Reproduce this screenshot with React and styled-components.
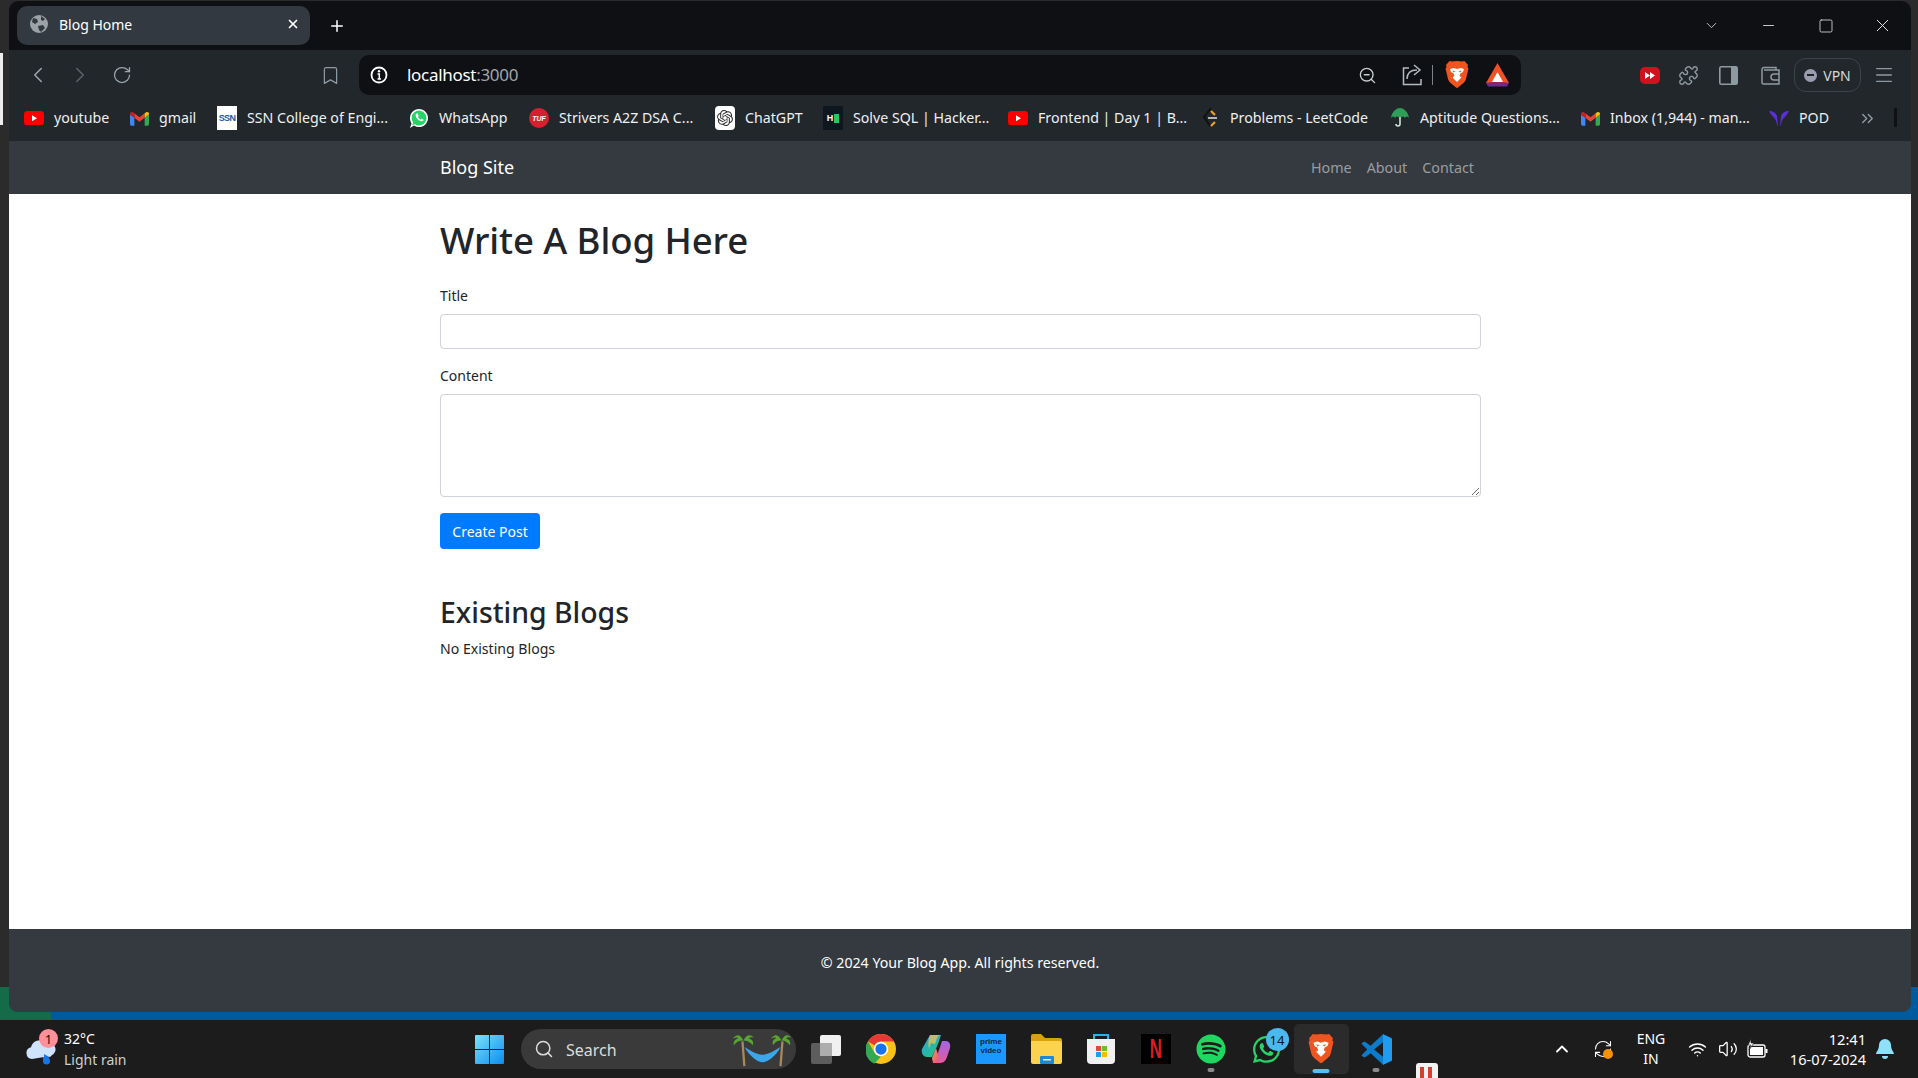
import React from 'react';
import styled, { createGlobalStyle } from 'styled-components';
import { ChevronLeft, ChevronRight, RotateCw, Bookmark, ZoomOut, Puzzle, Menu, ChevronDown, Minus, Square, X, Plus, Search, Wifi, Volume2, ChevronsRight, ChevronUp, RefreshCw } from 'lucide-react';
import { FaWhatsapp, FaSpotify } from 'react-icons/fa';
import { SiOpenai } from 'react-icons/si';

const Global = createGlobalStyle`
  html, body { margin: 0; padding: 0; width: 1918px; height: 1078px; overflow: hidden; }
  body { font-family: "Noto Sans", "Open Sans", sans-serif; }
  * { box-sizing: border-box; }
`;
const Screen = styled.div`width:1918px;height:1078px;display:flex;flex-direction:column;overflow:hidden;position:relative;`;
const Desktop = styled.div`
  height:1020px;padding:1px 7px 8px 9px;position:relative;
  background:
    linear-gradient(90deg,#156b49 0 51px,#005a9e 51px) left bottom/100% 33px no-repeat,
    #2b2b2b;
`;
const LeftSliver = styled.div`position:absolute;left:0;top:53px;width:3px;height:72px;background:#eee;`;
const Win = styled.div`height:1011px;border-radius:9px;overflow:hidden;display:flex;flex-direction:column;background:#343a40;`;
const TabStrip = styled.div`height:49px;background:#0e1014;display:flex;align-items:center;color:#fff;flex:none;`;
const Tab = styled.div`margin:-1px 0 0 8px;width:293px;height:39px;border-radius:10px;background:#323940;display:flex;align-items:center;padding:0 10px 2px 13px;color:#fff;font-size:14px;`;
const TabTitle = styled.span`margin-left:11px;flex:1;`;
const Slot = styled.div`
  width:${p=>p.$w||42}px;flex:none;display:flex;align-items:center;justify-content:center;
  margin-left:${p=>p.$ml||0}px;color:${p=>p.$c||'#9aa5ad'};position:relative;
`;
const Spacer = styled.div`flex:1;`;
const Toolbar = styled.div`height:45px;padding-top:5px;padding-left:8px;background:#22272c;display:flex;align-items:center;flex:none;`;
const Address = styled.div`width:1162px;height:40px;border-radius:10px;background:#0e1014;margin-left:8px;display:flex;align-items:center;padding-left:8px;flex:none;`;
const Url = styled.div`font-size:17px;color:#fff;margin:0 0 2px 16px;flex:1;letter-spacing:-.3px;& span{color:#a0a6ab;}`;
const Sep = styled.div`width:1px;height:20px;background:#7c848a;margin:0 4px;`;
const Vpn = styled.div`width:67px;height:34px;border:1px solid #3a444b;border-radius:12px;margin-left:3px;display:flex;align-items:center;justify-content:center;gap:6px;color:#d4d8db;font-size:14px;flex:none;`;
const VpnDot = styled.div`width:13px;height:13px;border-radius:50%;background:#9a9db0;display:flex;align-items:center;justify-content:center;&::after{content:"";width:7px;height:2px;background:#222;}`;
const Marks = styled.div`height:46px;background:#22272c;display:flex;align-items:center;padding-left:15px;flex:none;position:relative;`;
const Mark = styled.div`width:${p=>p.$w}px;flex:none;display:flex;align-items:center;color:#eef0f1;font-size:14.2px;white-space:nowrap;& > span{margin-bottom:2px;}`;
const MarkIcon = styled.div`width:20px;height:20px;margin-right:10px;flex:none;display:flex;align-items:center;justify-content:center;`;
const BarEnd = styled.div`position:absolute;left:1885px;top:13px;width:3px;height:19px;background:#0e1014;border-radius:1px;`;
const SsnLogo = styled.div`width:20px;height:24px;background:#fff;color:#1559a8;font:700 9px "Liberation Sans",sans-serif;display:flex;align-items:center;justify-content:center;letter-spacing:-.6px;`;
const Tuf = styled.div`width:20px;height:20px;border-radius:50%;background:#d5202f;color:#fff;font:italic 700 7px "Liberation Sans",sans-serif;display:flex;align-items:center;justify-content:center;`;
const Gpt = styled.div`width:20px;height:24px;border-radius:4px;background:#fff;color:#333;display:flex;align-items:center;justify-content:center;`;
const Hr = styled.div`width:20px;height:24px;background:#0e1620;display:flex;align-items:center;justify-content:center;gap:1px;color:#fff;font:700 9px "Liberation Sans",sans-serif;&::after{content:"";width:5px;height:9px;background:#1ecb6b;}`;

const Navbar = styled.nav`height:53px;background:#343a40;flex:none;`;
const Container = styled.div`width:1041px;margin-left:431px;`;
const NavInner = styled(Container)`height:100%;display:flex;align-items:center;justify-content:space-between;padding-right:7px;`;
const Brand = styled.a`color:#fff;font-size:18px;margin-bottom:2px;`;
const NavLinks = styled.div`display:flex;gap:15px;`;
const NavLink = styled.a`color:#9a9da0;font-size:14.3px;`;
const Page = styled.main`flex:1;background:#fff;padding-top:24px;color:#212529;`;
const H1 = styled.h1`margin:0 0 22px;font-size:36.6px;font-weight:500;line-height:45px;letter-spacing:-.1px;`;
const Group = styled.div`margin-bottom:16px;`;
const Label = styled.label`display:block;font-size:14px;line-height:22.5px;margin-bottom:6.5px;`;
const Input = styled.input`display:block;width:100%;height:35px;border:1px solid #ced4da;border-radius:4px;background:#fff;`;
const Area = styled.textarea`display:block;width:100%;height:103px;border:1px solid #ced4da;border-radius:4px;background:#fff;resize:vertical;`;
const Btn = styled.button`display:block;width:100px;height:36px;background:#007bff;border:0;border-radius:4px;color:#fff;font:14px "Noto Sans",sans-serif;padding:0;`;
const H2 = styled.h2`margin:44.5px 0 8.5px;font-size:28.4px;font-weight:500;line-height:36px;`;
const Note = styled.p`margin:0;font-size:14.1px;line-height:22.5px;`;
const Footer = styled.footer`height:83px;flex:none;background:#343a40;color:#fff;font-size:14.2px;text-align:center;padding-top:23px;line-height:22px;`;

const Taskbar = styled.div`height:58px;background:#1c1c1c;display:flex;align-items:center;padding-left:25px;flex:none;position:relative;overflow:hidden;`;
const Weather = styled.div`width:450px;flex:none;display:flex;align-items:center;position:relative;`;
const WeatherIcon = styled.div`width:39px;height:36px;flex:none;display:flex;align-items:flex-end;position:relative;`;
const Badge = styled.div`position:absolute;background:${p=>p.$bg};color:#111;border-radius:50%;display:flex;align-items:center;justify-content:center;
  width:${p=>p.$s}px;height:${p=>p.$s}px;left:${p=>p.$l}px;top:${p=>p.$t}px;font-size:13px;`;
const WeatherText = styled.div`color:#fff;font-size:14px;line-height:21px;& div+div{color:#d0d0d0;}`;
const SearchBox = styled.div`width:275px;height:40px;border-radius:20px;background:#3a3a3a;margin-left:17px;display:flex;align-items:center;padding:0 5px 0 13px;color:#ddd;font-size:16px;flex:none;gap:12px;& > span{margin-top:2px;}`;
const Apps = styled.div`display:flex;margin-left:2.5px;flex:none;align-items:center;`;
const AppSlot = styled.div`width:55px;height:50px;flex:none;display:flex;align-items:center;justify-content:center;position:relative;border-radius:5px;
  background:${p=>p.$active?'#2b2b2b':'transparent'};
`;
const Pip = styled.div`position:absolute;bottom:${p=>p.$active?1:2}px;left:50%;transform:translateX(-50%);width:${p=>p.$active?17:7}px;height:4px;border-radius:2px;background:${p=>p.$active?'#4cc2ff':'#8a8a8a'};`;
const Prime = styled.div`width:30px;height:30px;background:#1a98ff;color:#10233a;font:700 8px/8.5px "Liberation Sans",sans-serif;text-align:center;padding-top:4px;`;
const Flix = styled.div`width:30px;height:30px;background:#000;color:#d81f26;font:700 27px/30px "Liberation Sans",sans-serif;text-align:center;& span{display:inline-block;transform:scaleX(.62);}`;
const Peek = styled.div`position:absolute;left:1416px;top:43px;width:22px;height:22px;background:#f2f2f2;border-radius:3px;&::after{content:"";display:block;margin:4px;height:14px;background:repeating-linear-gradient(90deg,#d4412e 0 4px,#f2f2f2 4px 8px);}`;
const Tray = styled.div`position:absolute;right:0;top:0;height:58px;display:flex;align-items:center;color:#fff;`;
const Lang = styled.div`width:60px;text-align:center;font-size:14px;line-height:20px;`;
const Clock = styled.div`text-align:right;font-size:14.6px;line-height:20px;width:94px;white-space:nowrap;`;

const Yt=({w=20})=><svg width={w} height={w*.72} viewBox="0 0 20 14.4"><rect width="20" height="14.4" rx="3.4" fill="#f00"/><path d="M8 4.2l5 3-5 3z" fill="#fff"/></svg>;
const Gmail=()=><svg width="19" height="15" viewBox="0 0 24 18"><path fill="#4285f4" d="M0 4v12a2 2 0 0 0 2 2h3.500V8.200z"/><path fill="#34a853" d="M24 4v12a2 2 0 0 1-2 2h-3.500V8.200z"/><path fill="#ea4335" d="M5.500 8.200 12 13l6.500-4.800V2.500L12 7.300 5.500 2.500z"/><path fill="#c5221f" d="M0 4l5.500 4.200V2.500L4 1.400C2.200 0 0 1 0 3z"/><path fill="#fbbc04" d="M24 4l-5.500 4.200V2.500L20 1.400C21.800 0 24 1 24 3z"/></svg>;
const Wa=()=><svg width="20" height="24" viewBox="0 0 20 24"><path d="M1 12a9 9 0 1 1 4 7.500L1 22l1.500-4.500A9 9 0 0 1 1 12z" fill="#fff"/><path d="M2.600 12a7.400 7.400 0 1 1 3.300 6.200l-2.700 1 .9-2.700A7.400 7.400 0 0 1 2.600 12z" fill="#25d366"/><path d="M7.500 7.500c-1 .8-1.200 2.200-.2 4 1.100 2 3 3.500 5 3.800 1.200.1 2-.5 2.300-1.500l-2-1.200-1 .9c-1.100-.4-2-1.300-2.600-2.500l.8-1-1-2.500z" fill="#fff"/></svg>;
const Lc=()=><svg width="18" height="24" viewBox="0 0 18 24" fill="none"><path d="M10 2 3 11l6 9" stroke="#111" strokeWidth="2"/><path d="M10 5l4 4M14 16l-4 4" stroke="#f89f1b" strokeWidth="2.200"/><path d="M7 12h9" stroke="#b3b3b3" strokeWidth="2"/></svg>;
const Umbrella=()=><svg width="18" height="20" viewBox="0 0 18 20"><path d="M0 10C1 3 6 0 9 0s8 3 9 10c-2-2-3-2-4 0-1-2-3-2-5 0-2-2-4-2-5 0-1-2-2-2-4 0z" fill="#2f9e58"/><path d="M9 9v7a2 2 0 0 1-4 0" stroke="#cfe7d6" strokeWidth="1.600" fill="none"/></svg>;
const Pod=()=><svg width="20" height="17" viewBox="0 0 20 17" fill="#5b2fd6"><path d="M0 1c4 0 7 2 8 5l1 10c-1 0-1.500-5-3-7C4.500 7 2 5 0 1zM20 1c-4 0-7 2-8 5l-1 10c1 0 1.500-5 3-7 1.500-2 4-4 6-8z"/></svg>;
const Brave=({s=24})=><svg width={s} height={s*1.15} viewBox="0 0 24 27.600"><path d="M12 0l5 .5L19.500 0 23 4l-.5 2 1 1.500-2.500 10.500c-.8 3-3 4.500-5 6l-3 2.500c-.6.6-1.400.6-2 0l-3-2.500c-2-1.500-4.200-3-5-6L.5 7.500l1-1.500L1 4 4.500 0 7 .5z" fill="#f1551f"/><path d="M5 8l3.500-1L12 8l3.500-1L19 8l-1 3-2.500 1.500L14.500 15l2 1.500L12 21l-4.500-4.500 2-1.500-1-2.500L6 11z" fill="#fff"/><path d="M7.500 9.500l3 1-2 1zM16.500 9.500l-3 1 2 1z" fill="#f1551f"/></svg>;
const Bat=()=><svg width="23" height="24" viewBox="0 0 23 24"><path d="M11.500 0 23 20H0z" fill="#ef5226"/><path d="M0 20h23l-2 3.500H2z" fill="#6f2a8b"/><path d="M11.500 9 17 19H6z" fill="#fff"/><path d="M0 20 6 19h11l6 1-11.500 1z" fill="#9e1f63"/></svg>;
const Globe2=()=><svg width="18" height="18" viewBox="0 0 18 18"><circle cx="9" cy="9" r="9" fill="#9ba3a8"/><path d="M3 3l4 1 1 3-3 2-3-2zM11 1l4 3-2 2-2-1zM8 11l5-1 2 3-4 4-2-2z" fill="#323940"/></svg>;
const InfoI=()=><svg width="18" height="18" viewBox="0 0 18 18" fill="none"><circle cx="9" cy="9" r="7.500" stroke="#fff" strokeWidth="1.800"/><path d="M7.500 8H9.300v5M7.500 13h3.500" stroke="#fff" strokeWidth="1.500"/><circle cx="9" cy="5.300" r="1.200" fill="#fff"/></svg>;
const Share=()=><svg width="20" height="22" viewBox="0 0 20 22" fill="none" stroke="#b4bbc0" strokeWidth="1.500"><path d="M7 4H1.500v16.500H19V15"/><path d="M5 15c0-6 4-9 10-9"/><path d="M12 1l6 5-6 5"/></svg>;
const Ff=()=><svg width="20" height="17" viewBox="0 0 20 17"><rect width="20" height="17" rx="5" fill="#d0121e"/><path d="M5 5l5 3.500-5 3.500zM10 5l5 3.500-5 3.500z" fill="#fff"/></svg>;
const Side=()=><svg width="19" height="19" viewBox="0 0 19 19"><rect x=".8" y=".8" width="17.400" height="17.400" rx="1.500" fill="none" stroke="#8d9aa1" strokeWidth="1.600"/><rect x="12" y="1" width="6" height="17" fill="#8d9aa1"/></svg>;
const WalletI=()=><svg width="19" height="19" viewBox="0 0 19 19" fill="none" stroke="#8d9aa1" strokeWidth="1.500"><path d="M15 4V1.500H3A2 2 0 0 0 1 3.500v13a1.500 1.500 0 0 0 1.500 1.500H18V4H3"/><path d="M18 8h-5a2.500 2.500 0 0 0 0 6h5"/></svg>;
const Cloud=()=><svg width="32" height="32" viewBox="0 0 32 32"><path d="M18 16v10a3.500 3.500 0 0 0 7 0c0-3-3-6-7-10z" fill="#1677e8"/><path d="M7 24a6 6 0 0 1-1-11.800A9 9 0 0 1 22 9a6 6 0 0 1 5 11 4 4 0 0 1-3 2l-5-3v3z" fill="#cfe3ff"/></svg>;
const Win11=()=><svg width="29" height="29" viewBox="0 0 29 29"><defs><linearGradient id="wg" x1="0" y1="0" x2="1" y2="1"><stop offset="0" stopColor="#7be3fb"/><stop offset="1" stopColor="#0b8cf0"/></linearGradient></defs><path d="M0 1a1 1 0 0 1 1-1h13v14H0zM15 0h13a1 1 0 0 1 1 1v13H15zM0 15h14v14H1a1 1 0 0 1-1-1zM15 15h14v13a1 1 0 0 1-1 1H15z" fill="url(#wg)"/></svg>;
const Hammock=()=><svg width="59" height="40" viewBox="0 0 62 40" fill="none"><path d="M11 12l2 26M53 12l-2 26" stroke="#a9885f" strokeWidth="2.400"/><path d="M12 11C8 3 4 5 1 9c3-1 5-2 5 0-3 1-5 4-4 7 3-4 6-5 10-5zM12 11c3-6 7-7 11-3-3-1-5 0-5 1 3 1 5 3 4 7-3-3-6-5-10-5z" fill="#5aa431"/><path d="M52 11c-4-8-8-6-11-2 3-1 5-2 5 0-3 1-4 4-3 7 3-4 5-5 9-5zM52 11c3-6 7-7 10-3-3-1-5 0-5 1 3 1 5 3 4 7-3-3-5-5-9-5z" fill="#5aa431"/><path d="M13 18c6 10 14 16 19 16s14-6 19-16c-6 3-12 8-19 8s-13-5-19-8z" fill="#3ba7ea"/></svg>;
const TaskView=()=><svg width="30" height="29" viewBox="0 0 30 29"><rect x="9" y="0" width="21" height="21" rx="2" fill="#f0f0f0"/><rect y="8" width="21" height="21" rx="2" fill="#5d5d5d"/><rect x="9" y="8" width="12" height="13" fill="#adadad"/></svg>;
const Chrome=()=><svg width="30" height="30" viewBox="0 0 48 48"><circle cx="24" cy="24" r="24" fill="#fbc116"/><path d="M24 0a24 24 0 0 1 20.800 12H24a12 12 0 0 0-10.400 6L3.200 12A24 24 0 0 1 24 0z" fill="#e53935"/><path d="M3.200 12l10.400 18A12 12 0 0 0 24 36l-10.400 11.700A24 24 0 0 1 3.200 12z" fill="#34a853"/><circle cx="24" cy="24" r="11.500" fill="#fff"/><circle cx="24" cy="24" r="9" fill="#1a73e8"/></svg>;
const Copilot=()=><svg width="30" height="30" viewBox="0 0 30 30"><defs><linearGradient id="c1" x1="0" y1="0" x2="1" y2="1"><stop offset="0" stopColor="#27a5e8"/><stop offset="1" stopColor="#28c76f"/></linearGradient><linearGradient id="c2" x1="0" y1="0" x2="1" y2="1"><stop offset="0" stopColor="#f8a04a"/><stop offset="1" stopColor="#e84a8a"/></linearGradient><linearGradient id="c3" x1="0" y1="0" x2="0" y2="1"><stop offset="0" stopColor="#a066e8"/><stop offset="1" stopColor="#e85a9a"/></linearGradient></defs><path d="M9 1h11l-3 9-6 13H6C2 23 0 19 1 15z" fill="url(#c1)"/><path d="M21 7h4c3 0 5 3 4 7l-3 9c-1 3-3 6-7 6h-6l5-13z" fill="url(#c3)"/><path d="M11 24l4-10 3 10-3 5h-3z" fill="url(#c2)"/><path d="M9 1h11c-2 0-3 1-4 3l-2 6-4-1-2 6c-1-5-1-10 1-14z" fill="#f5c14c" opacity=".75"/></svg>;
const Folder=()=><svg width="31" height="30" viewBox="0 0 31 30"><path d="M0 2a2 2 0 0 1 2-2h8l4 4h15a2 2 0 0 1 2 2v6H0z" fill="#d9a10c"/><path d="M0 7h29a2 2 0 0 1 2 2v19a2 2 0 0 1-2 2H2a2 2 0 0 1-2-2z" fill="#fcd34d"/><rect x="9" y="22" width="14" height="8" rx="1" fill="#1b88d8"/><rect x="12" y="25" width="8" height="1.500" fill="#d6ecfb"/></svg>;
const Store=()=><svg width="30" height="32" viewBox="0 0 30 32"><path d="M8 8V2h14v6" fill="none" stroke="#27b4ee" strokeWidth="2"/><path d="M1 6h28v21a4 4 0 0 1-4 4H5a4 4 0 0 1-4-4z" fill="#f1f1f1"/><rect x="10" y="13" width="5" height="5" fill="#e84a2b"/><rect x="16" y="13" width="5" height="5" fill="#6fc01d"/><rect x="10" y="19" width="5" height="5" fill="#1aa1ef"/><rect x="16" y="19" width="5" height="5" fill="#fbb908"/></svg>;
const Vs=()=><svg width="31" height="31" viewBox="0 0 100 100"><path d="M71 99l26-12c2-1 3-3 3-5V18c0-2-1-4-3-5L71 1 31 38 12 24l-8 4c-2 1-3 4 0 6l16 16L4 66c-3 2-2 5 0 6l8 4 19-14z" fill="#0a7ccb"/><path d="M71 27 42 50l29 23z" fill="#1c1c1c"/><path d="M71 1l26 12c2 1 3 3 3 5v64c0 2-1 4-3 5L71 99z" fill="#1f9cf0"/></svg>;
const Batt=()=><svg width="21" height="20" viewBox="0 0 21 20" fill="none"><rect x="1" y="6" width="17" height="12" rx="2" stroke="#fff" strokeWidth="1.300"/><rect x="3" y="8" width="13" height="8" fill="#fff"/><rect x="18.500" y="10" width="2" height="4" fill="#fff"/><path d="M4 0 1 6h3l-2 5 5-7H4z" fill="#fff" stroke="#1c1c1c" strokeWidth=".7"/></svg>;
const BellI=()=><svg width="18" height="20" viewBox="0 0 18 20"><path d="M9 0a6 6 0 0 1 6 6c0 5 3 7 3 9H0c0-2 3-4 3-9a6 6 0 0 1 6-6z" fill="#8fe1fb"/><path d="M6 17h6a3 3 0 0 1-6 0z" fill="#8fe1fb"/></svg>;
const Dot=styled.div`position:absolute;left:50%;top:50%;width:10px;height:10px;border-radius:50%;background:#f79009;`;

const marks=[
 {t:'youtube',w:105,i:<Yt/>},{t:'gmail',w:88,i:<Gmail/>},{t:'SSN College of Engi...',w:192,i:<SsnLogo>SSN</SsnLogo>},
 {t:'WhatsApp',w:120,i:<Wa/>},{t:'Strivers A2Z DSA C...',w:186,i:<Tuf>TUF</Tuf>},{t:'ChatGPT',w:108,i:<Gpt><SiOpenai size={16}/></Gpt>},
 {t:'Solve SQL | Hacker...',w:185,i:<Hr>H</Hr>},{t:'Frontend | Day 1 | B...',w:192,i:<Yt/>},{t:'Problems - LeetCode',w:190,i:<Lc/>},
 {t:'Aptitude Questions...',w:190,i:<Umbrella/>},{t:'Inbox (1,944) - man...',w:189,i:<Gmail/>},{t:'POD',w:88,i:<Pod/>},
];

export default function App(){
 return <Screen><Global/>
  <Desktop>
   <LeftSliver/>
   <Win>
    <TabStrip>
     <Tab><Globe2/><TabTitle>Blog Home</TabTitle><X size={14} color="#fff" strokeWidth={3}/></Tab>
     <Slot $w={54} $c="#fff"><Plus size={18} strokeWidth={2}/></Slot>
     <Spacer/>
     <Slot $w={57} $c="#d8dadb"><ChevronDown size={17} strokeWidth={1.2}/></Slot>
     <Slot $w={57} $c="#e8e8e8"><Minus size={17} strokeWidth={1.2}/></Slot>
     <Slot $w={57} $c="#e8e8e8"><Square size={16} strokeWidth={1.2}/></Slot>
     <Slot $w={57} $c="#e8e8e8"><X size={21} strokeWidth={1.1}/></Slot>
    </TabStrip>
    <Toolbar>
     <Slot $c="#9aa5ad"><ChevronLeft size={26} strokeWidth={1.4}/></Slot>
     <Slot $c="#59636a"><ChevronRight size={26} strokeWidth={1.4}/></Slot>
     <Slot $c="#9aa5ad"><RotateCw size={20} strokeWidth={1.5}/></Slot>
     <Slot $ml={166} $c="#8d9aa1"><Bookmark size={21} strokeWidth={1.4}/></Slot>
     <Address>
      <Slot $w={24}><InfoI/></Slot>
      <Url>localhost<span>:3000</span></Url>
      <Slot $w={24} $c="#c8cdd0"><ZoomOut size={19} strokeWidth={1.7}/></Slot>
      <Slot $w={33} $ml={15.5}><Share/></Slot>
      <Sep/>
      <Slot $w={32} $ml={3.5}><Brave/></Slot>
      <Slot $w={47} $ml={1.5}><Bat/></Slot>
     </Address>
     <Slot $w={38} $ml={110}><Ff/></Slot>
     <Slot $w={38} $c="#8d9aa1"><Puzzle size={21} strokeWidth={1.6}/></Slot>
     <Slot><Side/></Slot>
     <Slot><WalletI/></Slot>
     <Vpn><VpnDot/>VPN</Vpn>
     <Slot $w={46} $c="#8d9aa1"><Menu size={22} strokeWidth={1.5}/></Slot>
    </Toolbar>
    <Marks>
     {marks.map(m=><Mark key={m.t} $w={m.w}><MarkIcon>{m.i}</MarkIcon><span>{m.t}</span></Mark>)}
     <Slot $w={20} $c="#8d9aa1"><ChevronsRight size={19} strokeWidth={1.8}/></Slot>
     <BarEnd/>
    </Marks>
    <Navbar><NavInner><Brand>Blog Site</Brand><NavLinks><NavLink>Home</NavLink><NavLink>About</NavLink><NavLink>Contact</NavLink></NavLinks></NavInner></Navbar>
    <Page><Container>
      <H1>Write A Blog Here</H1>
      <Group><Label>Title</Label><Input/></Group>
      <Group><Label>Content</Label><Area/></Group>
      <Btn>Create Post</Btn>
      <H2>Existing Blogs</H2>
      <Note>No Existing Blogs</Note>
    </Container></Page>
    <Footer>© 2024 Your Blog App. All rights reserved.</Footer>
   </Win>
  </Desktop>
  <Taskbar>
   <Weather>
    <WeatherIcon><Cloud/><Badge $bg="#ff8f98" $s={19} $l={14} $t={-2}>1</Badge></WeatherIcon>
    <WeatherText><div>32°C</div><div>Light rain</div></WeatherText>
   </Weather>
   <Win11/>
   <SearchBox><Search size={20} strokeWidth={1.8}/><span>Search</span><Spacer/><Hammock/></SearchBox>
   <Apps>
    <AppSlot><TaskView/></AppSlot>
    <AppSlot><Chrome/></AppSlot>
    <AppSlot><Copilot/></AppSlot>
    <AppSlot><Prime>prime video</Prime></AppSlot>
    <AppSlot><Folder/></AppSlot>
    <AppSlot><Store/></AppSlot>
    <AppSlot><Flix><span>N</span></Flix></AppSlot>
    <AppSlot><FaSpotify size={30} color="#1ed760"/><Pip/></AppSlot>
    <AppSlot><FaWhatsapp size={31} color="#25d366"/><Badge $bg="#4cb8f0" $s={23} $l={27} $t={4}>14</Badge></AppSlot>
    <AppSlot $active><Brave s={26}/><Pip $active/></AppSlot>
    <AppSlot><Vs/><Pip/></AppSlot>
   </Apps>
   <Peek/>
   <Tray>
    <Slot $w={44} $c="#fff"><ChevronUp size={20} strokeWidth={2.2}/></Slot>
    <Slot $w={37} $c="#fff"><RefreshCw size={20} strokeWidth={1.3}/><Dot/></Slot>
    <Lang>ENG<br/>IN</Lang>
    <Slot $w={34} $ml={-1} $c="#fff"><Wifi size={19} strokeWidth={1.8}/></Slot>
    <Slot $w={28} $c="#fff"><Volume2 size={20} strokeWidth={1.5}/></Slot>
    <Slot $w={30}><Batt/></Slot>
    <Clock>12:41<br/>16-07-2024</Clock>
    <Slot $w={37}><BellI/></Slot>
    <Slot $w={15}/>
   </Tray>
  </Taskbar>
 </Screen>;
}
